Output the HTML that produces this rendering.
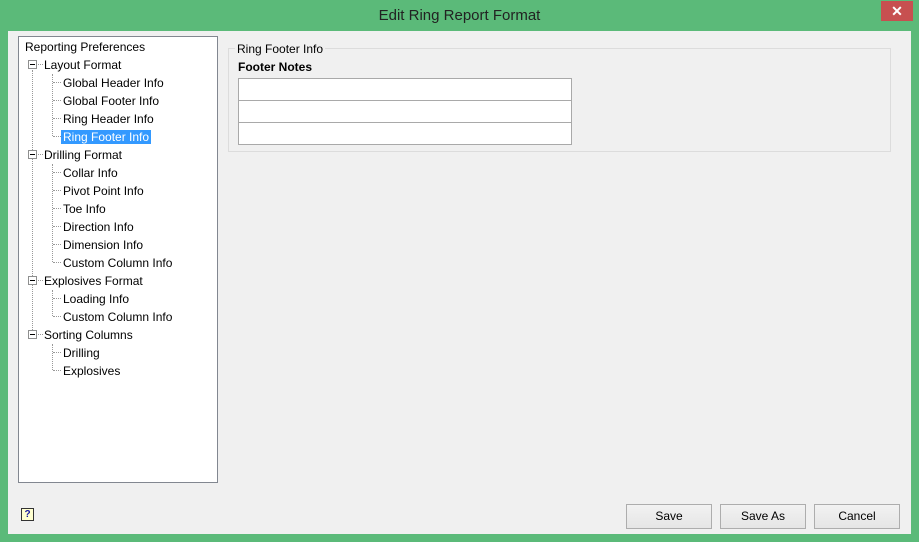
<!DOCTYPE html>
<html><head><style>
*{margin:0;padding:0;box-sizing:border-box}
body{width:919px;height:542px;background:#5bba79;position:relative;overflow:hidden;font-family:"Liberation Sans",sans-serif;font-size:12px;color:#000}
.title{position:absolute;left:0;top:7px;width:919px;text-align:center;font-size:15px;color:#222}
.close{position:absolute;left:881px;top:1px;width:32px;height:20px;background:#c75050;color:#fff;text-align:center;font-size:14px;line-height:20px;font-weight:bold}
.client{position:absolute;left:8px;top:31px;width:903px;height:503px;background:#f0f0f0}
.tree{position:absolute;left:18px;top:36px;width:200px;height:447px;background:#fff;border:1px solid #828790}
.t{position:absolute;white-space:nowrap;line-height:16px}
.sel{background:#3399ff;color:#fff;padding:0 2px;margin-left:-2px}
.vl{position:absolute;border-left:1px dotted #999;width:0}
.hl{position:absolute;border-top:1px dotted #999;height:0}
.pm{position:absolute;width:9px;height:9px;border:1px solid #8e8f8f;background:#fff}
.pm:after{content:"";position:absolute;left:1px;top:3px;width:5px;height:1px;background:#000}
.gb{position:absolute;left:228px;top:48px;width:663px;height:104px;border:1px solid #dcdcdc}
.tb{position:absolute;left:238px;width:334px;height:23px;background:#fff;border:1px solid #a9a9a9}
.btn{position:absolute;top:504px;width:86px;height:25px;border:1px solid #adadad;background:linear-gradient(#f2f2f2,#e5e5e5);text-align:center;line-height:23px}
</style></head><body>
<div class="title">Edit Ring Report Format</div>
<div class="close">✕</div>
<div class="client"></div>
<div class="tree"></div>
<!-- tree lines -->
<div class="vl" style="left:32px;top:70px;height:268px"></div>
<div class="vl" style="left:52px;top:74px;height:62px"></div>
<div class="vl" style="left:52px;top:164px;height:98px"></div>
<div class="vl" style="left:52px;top:290px;height:26px"></div>
<div class="vl" style="left:52px;top:344px;height:26px"></div>
<div class="hl" style="left:38px;top:64px;width:5px"></div>
<div class="hl" style="left:38px;top:154px;width:5px"></div>
<div class="hl" style="left:38px;top:280px;width:5px"></div>
<div class="hl" style="left:38px;top:334px;width:5px"></div>
<div class="pm" style="left:28px;top:60px"></div>
<div class="pm" style="left:28px;top:150px"></div>
<div class="pm" style="left:28px;top:276px"></div>
<div class="pm" style="left:28px;top:330px"></div>
<div class="hl" style="left:53px;top:82px;width:8px"></div>
<div class="hl" style="left:53px;top:100px;width:8px"></div>
<div class="hl" style="left:53px;top:118px;width:8px"></div>
<div class="hl" style="left:53px;top:136px;width:8px"></div>
<div class="hl" style="left:53px;top:172px;width:8px"></div>
<div class="hl" style="left:53px;top:190px;width:8px"></div>
<div class="hl" style="left:53px;top:208px;width:8px"></div>
<div class="hl" style="left:53px;top:226px;width:8px"></div>
<div class="hl" style="left:53px;top:244px;width:8px"></div>
<div class="hl" style="left:53px;top:262px;width:8px"></div>
<div class="hl" style="left:53px;top:298px;width:8px"></div>
<div class="hl" style="left:53px;top:316px;width:8px"></div>
<div class="hl" style="left:53px;top:352px;width:8px"></div>
<div class="hl" style="left:53px;top:370px;width:8px"></div>
<div class="t" style="left:25px;top:39px">Reporting Preferences</div>
<div class="t" style="left:44px;top:57px">Layout Format</div>
<div class="t" style="left:63px;top:75px">Global Header Info</div>
<div class="t" style="left:63px;top:93px">Global Footer Info</div>
<div class="t" style="left:63px;top:111px">Ring Header Info</div>
<div class="t" style="left:63px;top:129px"><span class="sel">Ring Footer Info</span></div>
<div class="t" style="left:44px;top:147px">Drilling Format</div>
<div class="t" style="left:63px;top:165px">Collar Info</div>
<div class="t" style="left:63px;top:183px">Pivot Point Info</div>
<div class="t" style="left:63px;top:201px">Toe Info</div>
<div class="t" style="left:63px;top:219px">Direction Info</div>
<div class="t" style="left:63px;top:237px">Dimension Info</div>
<div class="t" style="left:63px;top:255px">Custom Column Info</div>
<div class="t" style="left:44px;top:273px">Explosives Format</div>
<div class="t" style="left:63px;top:291px">Loading Info</div>
<div class="t" style="left:63px;top:309px">Custom Column Info</div>
<div class="t" style="left:44px;top:327px">Sorting Columns</div>
<div class="t" style="left:63px;top:345px">Drilling</div>
<div class="t" style="left:63px;top:363px">Explosives</div>
<div class="gb"></div>
<div class="t" style="left:235px;top:41px;background:#f0f0f0;padding:0 2px">Ring Footer Info</div>
<div class="t" style="left:238px;top:59px;font-weight:bold">Footer Notes</div>
<div class="tb" style="top:78px"></div>
<div class="tb" style="top:100px"></div>
<div class="tb" style="top:122px"></div>
<div class="btn" style="left:626px">Save</div>
<div class="btn" style="left:720px">Save As</div>
<div class="btn" style="left:814px">Cancel</div>
<div style="position:absolute;left:21px;top:508px;width:13px;height:13px;border:1px solid #333;background:#ffffd0;font-size:10px;font-weight:bold;color:#1a1aa0;text-align:center;line-height:11px">?</div>
</body></html>
